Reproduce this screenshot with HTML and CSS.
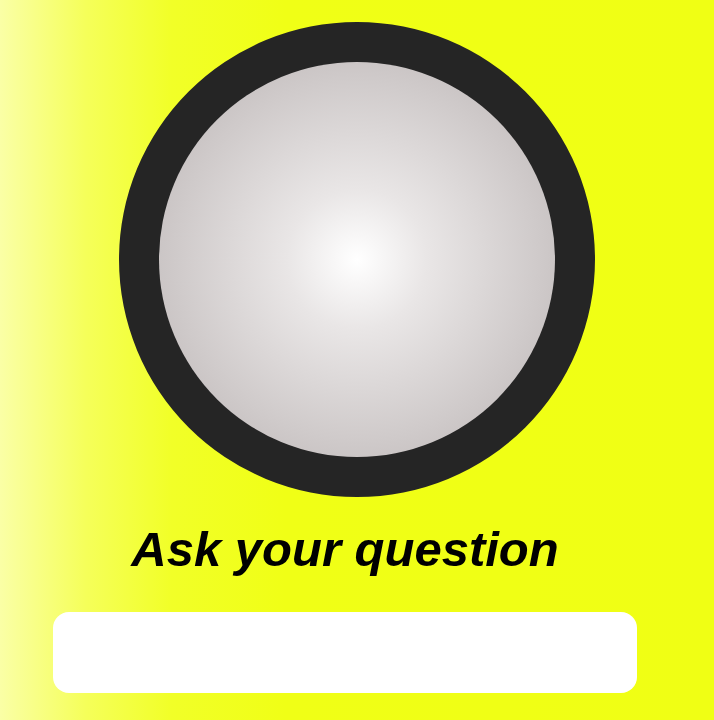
FILE: index.html
```html
<!DOCTYPE html>
<html lang="en">
<head>
<meta charset="utf-8">
<title>Magic Ball</title>
<link rel="stylesheet" href="styles.css">
</head>
<body>
<main class="page">
  <div class="ball">
    <div class="ball-face"></div>
  </div>
  <h1 class="prompt">Ask your question</h1>
  <input class="question" type="text" aria-label="Your question">
</main>
</body>
</html>
```

FILE: styles.css
```css
html, body {
  margin: 0;
  padding: 0;
  height: 100%;
}

body {
  background: linear-gradient(90deg, #faffa6 0%, #f5ff5a 12%, #f1ff28 24%, #f0ff16 40%, #f0ff14 100%);
  font-family: "Liberation Sans", Arial, sans-serif;
  overflow: hidden;
}

.page {
  display: flex;
  flex-direction: column;
  align-items: flex-start;
  padding-top: 22px;
}

.ball {
  box-sizing: border-box;
  width: 476px;
  height: 475px;
  margin-left: 119px;
  border: 40px solid #252525;
  border-radius: 50%;
  background: #252525;
}

.ball-face {
  width: 100%;
  height: 100%;
  border-radius: 50%;
  background: radial-gradient(circle at 50% 50%, #ffffff 0%, #e9e6e6 25%, #cfcaca 65%, #b7b0b0 100%);
}

.prompt {
  margin: 25px 0 0 0;
  width: 690px;
  text-align: center;
  font-size: 49px;
  font-weight: bold;
  font-style: italic;
  line-height: 54px;
  color: #000;
}

.question {
  box-sizing: border-box;
  margin: 36px 0 0 53px;
  width: 584px;
  height: 81px;
  border: none;
  border-radius: 16px;
  background: #fff;
  outline: none;
}
```
